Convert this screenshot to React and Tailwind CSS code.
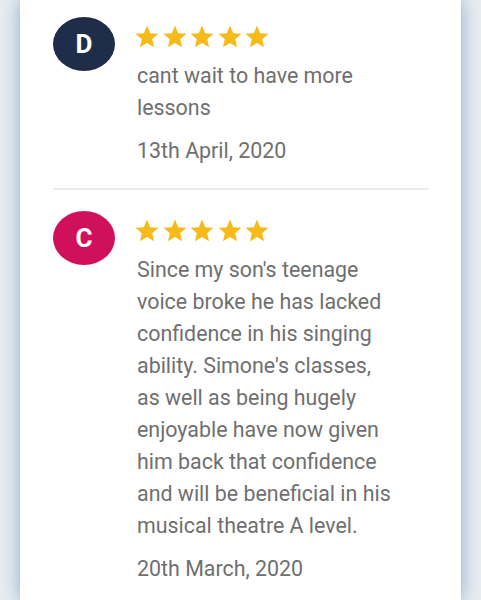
import React from "react";

function Star() {
  return (
    <svg width="24" height="24" viewBox="1.5 1.5 21 21" className="block">
      <path
        fill="#f6bb1b"
        d="M12 17.27L18.18 21l-1.64-7.03L22 9.24l-7.19-.61L12 2 9.19 8.63 2 9.24l5.46 4.73L5.82 21z"
      />
    </svg>
  );
}

function Review({ letter, color, text, date, first }) {
  return (
    <div className={`flex gap-[22px] ${first ? "pt-[17px]" : "pt-[21px]"} pb-[21px]`}>
      <div
        className={`w-[62px] h-[54px] rounded-[50%] flex items-center justify-center shrink-0 text-white text-[26px] font-bold ${color}`}
      >
        {letter}
      </div>
      <div className="flex flex-col w-[256px]">
        <div className="flex gap-[3.5px] mt-[8px] ml-[-2px]">
          <Star />
          <Star />
          <Star />
          <Star />
          <Star />
        </div>
        <p className="mt-[11px] text-[21.4px] leading-[32px] text-[#6f6f6f]">{text}</p>
        <p className="mt-[11px] text-[21.4px] leading-[32px] text-[#6f6f6f]">{date}</p>
      </div>
    </div>
  );
}

export default function App() {
  return (
    <div
      className="w-[481px] h-[600px] overflow-hidden bg-[#e8edf1] px-[20px]"
      style={{ fontFamily: "Roboto, 'Liberation Sans', sans-serif" }}
    >
      <div className="bg-white h-full pl-[33px] pr-[32px] shadow-[0_0_18px_rgba(105,150,190,0.75)]">
        <Review
          first
          letter="D"
          color="bg-[#1f2d4b]"
          text="cant wait to have more lessons"
          date="13th April, 2020"
        />
        <div className="h-[2px] bg-[#ebebeb]" />
        <Review
          letter="C"
          color="bg-[#d0105a]"
          text="Since my son's teenage voice broke he has lacked confidence in his singing ability. Simone's classes, as well as being hugely enjoyable have now given him back that confidence and will be beneficial in his musical theatre A level."
          date="20th March, 2020"
        />
      </div>
    </div>
  );
}
